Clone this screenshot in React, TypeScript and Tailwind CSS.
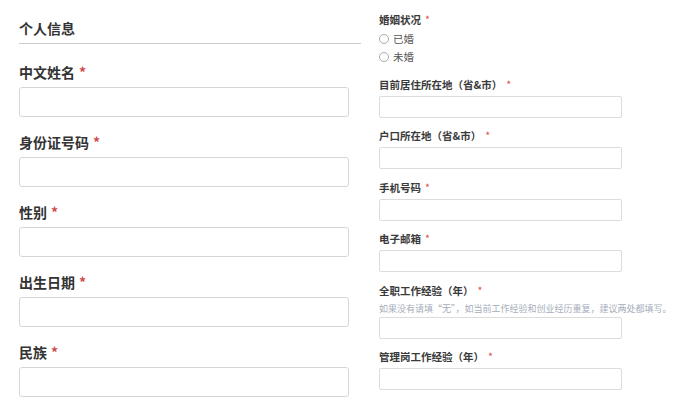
import React from "react";

const font = { fontFamily: '"Noto Sans CJK SC", "Noto Sans", sans-serif' };

function LeftField({ label }: { label: string }) {
  return (
    <div className="mb-[15px]">
      <div className="text-[14px] leading-[20px] font-bold text-[#333] mb-[5px]">
        {label}
        <span className="ml-[4px] text-[#cf4a50]">*</span>
      </div>
      <div className="h-[30px] w-[330px] border border-[#d6d6d6] rounded-[3px] bg-white" />
    </div>
  );
}

function RightField({ label, helper }: { label: string; helper?: string }) {
  return (
    <div className="mb-[11.5px]">
      <div className="text-[10.5px] leading-[14px] font-bold text-[#3a3a3a] mb-[4px]">
        {label}
        <span className="ml-[4px] text-[#d9534f] font-normal">*</span>
      </div>
      {helper && (
        <div className="text-[9px] leading-[14px] text-[#a6aebb] whitespace-nowrap mb-[1px]">{helper}</div>
      )}
      <div className="h-[22px] w-[243px] border border-[#dcdcdc] rounded-[2px] bg-white" />
    </div>
  );
}

function Radio({ label }: { label: string }) {
  return (
    <div className="flex items-center h-[18px]">
      <span className="w-[10px] h-[10px] rounded-full border border-[#a9a9a9] bg-white" />
      <span className="ml-[4px] text-[10.5px] text-[#555]">{label}</span>
    </div>
  );
}

export default function App() {
  return (
    <div className="w-[688px] h-[412px] bg-white overflow-hidden flex" style={font}>
      <div className="ml-[19px] w-[342px] pt-[18px]">
        <div className="text-[14px] leading-[21px] font-bold text-[#333] pb-[4px] border-b border-[#c9ccd2]">
          个人信息
        </div>
        <div className="mt-[17.5px]">
          <LeftField label="中文姓名" />
          <LeftField label="身份证号码" />
          <LeftField label="性别" />
          <LeftField label="出生日期" />
          <LeftField label="民族" />
        </div>
      </div>
      <div className="ml-[18px] pt-[12.5px]">
        <div className="text-[10.5px] leading-[14px] font-bold text-[#3a3a3a]">
          婚姻状况
          <span className="ml-[4px] text-[#d9534f] font-normal">*</span>
        </div>
        <div className="mt-[3.5px] mb-[11.5px]">
          <Radio label="已婚" />
          <Radio label="未婚" />
        </div>
        <RightField label="目前居住所在地（省&市）" />
        <RightField label="户口所在地（省&市）" />
        <RightField label="手机号码" />
        <RightField label="电子邮箱" />
        <RightField
          label="全职工作经验（年）"
          helper="如果没有请填“无”，如当前工作经验和创业经历重复，建议两处都填写。"
        />
        <RightField label="管理岗工作经验（年）" />
      </div>
    </div>
  );
}
